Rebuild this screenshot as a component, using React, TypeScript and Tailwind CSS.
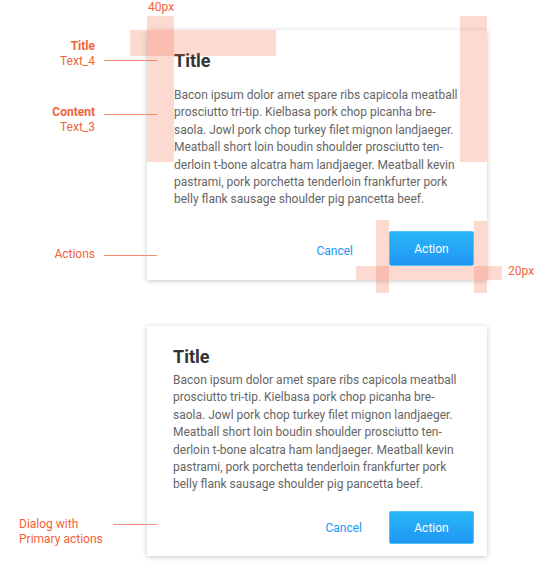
const lines = [
  "Bacon ipsum dolor amet spare ribs capicola meatball",
  "prosciutto tri-tip. Kielbasa pork chop picanha bre-",
  "saola. Jowl pork chop turkey filet mignon landjaeger.",
  "Meatball short loin boudin shoulder prosciutto ten-",
  "derloin t-bone alcatra ham landjaeger. Meatball kevin",
  "pastrami, pork porchetta tenderloin frankfurter pork",
  "belly flank sausage shoulder pig pancetta beef.",
];

function Body({ className = "" }: { className?: string }) {
  return (
    <p className={`text-[12px] leading-[17.4px] text-[#666666] whitespace-nowrap ${className}`}>
      {lines.map((l) => (
        <span key={l} className="block">
          {l}
        </span>
      ))}
    </p>
  );
}

function ActionButton({ h }: { h: string }) {
  return (
    <button
      className={`w-[85px] ${h} rounded-[2px] border border-[#4fc3f7] bg-linear-to-b from-[#29b6f6] to-[#2196f3] text-[12px] text-white`}
    >
      Action
    </button>
  );
}

const leader = "h-px bg-[#f58a6e]";

export default function App() {
  return (
    <div className="relative w-[549px] h-[568px] bg-white font-['Roboto',sans-serif] overflow-hidden">
      <div className="flex flex-col gap-[46px] pt-[30px] pl-[147px]">
        {/* dialog 1 */}
        <div className="flex h-[250px] w-[340px] flex-col bg-white pt-[19px] pl-[27px] pr-[13px] pb-[14px] shadow-[0_1px_5px_rgba(0,0,0,0.22)]">
          <h2 className="h-6 text-[18px] font-bold leading-6 text-[#333333]">Title</h2>
          <Body className="mt-[14px]" />
          <div className="mt-auto flex items-center justify-end">
            <span className="mr-[36px] mt-[4px] text-[12px] text-[#2196f3]">Cancel</span>
            <ActionButton h="h-[35px]" />
          </div>
        </div>

        {/* dialog 2 */}
        <div className="flex h-[230px] w-[340px] flex-col bg-white pt-[19px] pl-[26px] pr-[13px] pb-[12px] shadow-[0_1px_5px_rgba(0,0,0,0.22)]">
          <h2 className="h-6 text-[18px] font-bold leading-6 text-[#333333]">Title</h2>
          <Body className="mt-[3px]" />
          <div className="mt-auto flex items-center justify-end">
            <span className="mr-[27px] text-[12px] text-[#2196f3]">Cancel</span>
            <ActionButton h="h-[33px]" />
          </div>
        </div>
      </div>

      {/* spacing overlays */}
      <div className="absolute left-[147px] top-[16px] h-[146px] w-[27px] bg-[#f26b4a]/25" />
      <div className="absolute left-[130px] top-[30px] h-[26px] w-[146px] bg-[#f26b4a]/25" />
      <div className="absolute left-[460px] top-[16px] h-[146px] w-[27px] bg-[#f26b4a]/25" />
      <div className="absolute left-[376px] top-[220px] h-[73px] w-[13px] bg-[#f26b4a]/25" />
      <div className="absolute left-[474px] top-[221px] h-[72px] w-[13px] bg-[#f26b4a]/25" />
      <div className="absolute left-[356px] top-[266px] h-[14px] w-[146px] bg-[#f26b4a]/25" />

      <span className="absolute left-[148px] top-0 text-[12px] leading-[15px] text-[#f4623a]">40px</span>
      <span className="absolute left-[508px] top-[264px] text-[12px] leading-[15px] text-[#f4623a]">20px</span>

      {/* annotations */}
      <div className="absolute left-0 top-[39px] flex items-end gap-[9px] text-[12px] leading-[15px] text-[#f4623a]">
        <div className="w-[95px] text-right">
          <div className="font-bold">Title</div>
          <div>Text_4</div>
        </div>
        <div className={`${leader} mb-[8px] w-[53px]`} />
      </div>
      <div className="absolute left-0 top-[105px] flex items-start gap-[9px] text-[12px] leading-[15px] text-[#f4623a]">
        <div className="w-[95px] text-right">
          <div className="font-bold">Content</div>
          <div>Text_3</div>
        </div>
        <div className={`${leader} mt-[9px] w-[53px]`} />
      </div>
      <div className="absolute left-0 top-[247px] flex items-start gap-[9px] text-[12px] leading-[15px] text-[#f4623a]">
        <div className="w-[95px] text-right">Actions</div>
        <div className={`${leader} mt-[8px] w-[53px]`} />
      </div>
      <div className="absolute left-[19px] top-[517px] flex items-start text-[12px] leading-[15px] text-[#f4623a]">
        <div className="w-[94px]">
          <div>Dialog with</div>
          <div>Primary actions</div>
        </div>
        <div className={`${leader} mt-[7px] w-[44px]`} />
      </div>
    </div>
  );
}
